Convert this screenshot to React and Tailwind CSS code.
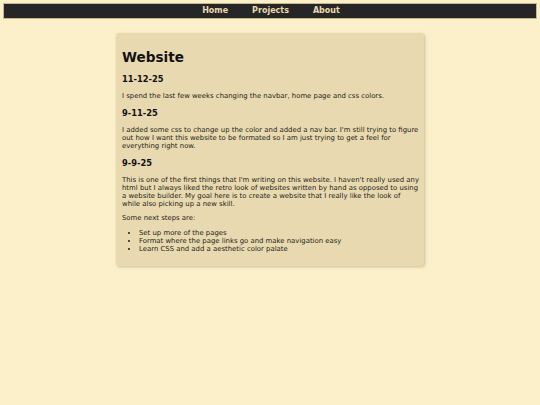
const NAV = ['Home', 'Projects', 'About']

const ENTRIES = [
  {
    date: '11-12-25',
    body: ['I spend the last few weeks changing the navbar, home page and css colors.'],
  },
  {
    date: '9-11-25',
    body: [
      "I added some css to change up the color and added a nav bar. I'm still trying to figure out how I want this website to be formated so I am just trying to get a feel for everything right now.",
    ],
  },
]

export default function App() {
  return (
    <div className="min-h-[405px] bg-[#fbf0ca] p-[3px] font-['DejaVu_Sans',sans-serif] text-[#231e16]">
      {/* Navbar */}
      <nav className="h-[16px] border border-[#c9b78c] bg-[#262626] flex items-center justify-center gap-[24px] pl-[2px]">
        {NAV.map((n) => (
          <a key={n} className="text-[8px] font-bold text-[#ead9ae] leading-none">
            {n}
          </a>
        ))}
      </nav>

      {/* Content card */}
      <main className="mx-auto mt-[14px] w-[308px] rounded-[3px] bg-[#e9d9b0] pl-[6px] pr-[5px] pt-[15px] pb-[13px] shadow-[1px_1px_3px_rgba(120,100,60,0.35)]">
        <h1 className="text-[13.6px] font-bold leading-[18px] text-[#111]">Website</h1>

        {ENTRIES.map((e) => (
          <section key={e.date}>
            <h3 className="mt-[8px] text-[8.3px] font-bold leading-[11px] text-[#111]">{e.date}</h3>
            {e.body.map((p, i) => (
              <p key={i} className="mt-[7px] text-[6.9px] leading-[8px]">{p}</p>
            ))}
          </section>
        ))}

        <h3 className="mt-[8px] text-[8.3px] font-bold leading-[11px] text-[#111]">9-9-25</h3>
        <p className="mt-[7px] text-[6.9px] leading-[8px]">
          This is one of the first things that I'm writing on this website. I haven't really used any html but I always liked
          the retro look of websites written by hand as opposed to using a website builder. My goal here is to create a website
          that I really like the look of while also picking up a new skill.
        </p>
        <p className="mt-[6px] text-[6.9px] leading-[8px]">Some next steps are:</p>
        <ul className="mt-[7px] list-disc pl-[17px] text-[6.9px] leading-[8px]">
          <li>Set up more of the pages</li>
          <li>Format where the page links go and make navigation easy</li>
          <li>Learn CSS and add a aesthetic color palate</li>
        </ul>
      </main>
    </div>
  )
}
